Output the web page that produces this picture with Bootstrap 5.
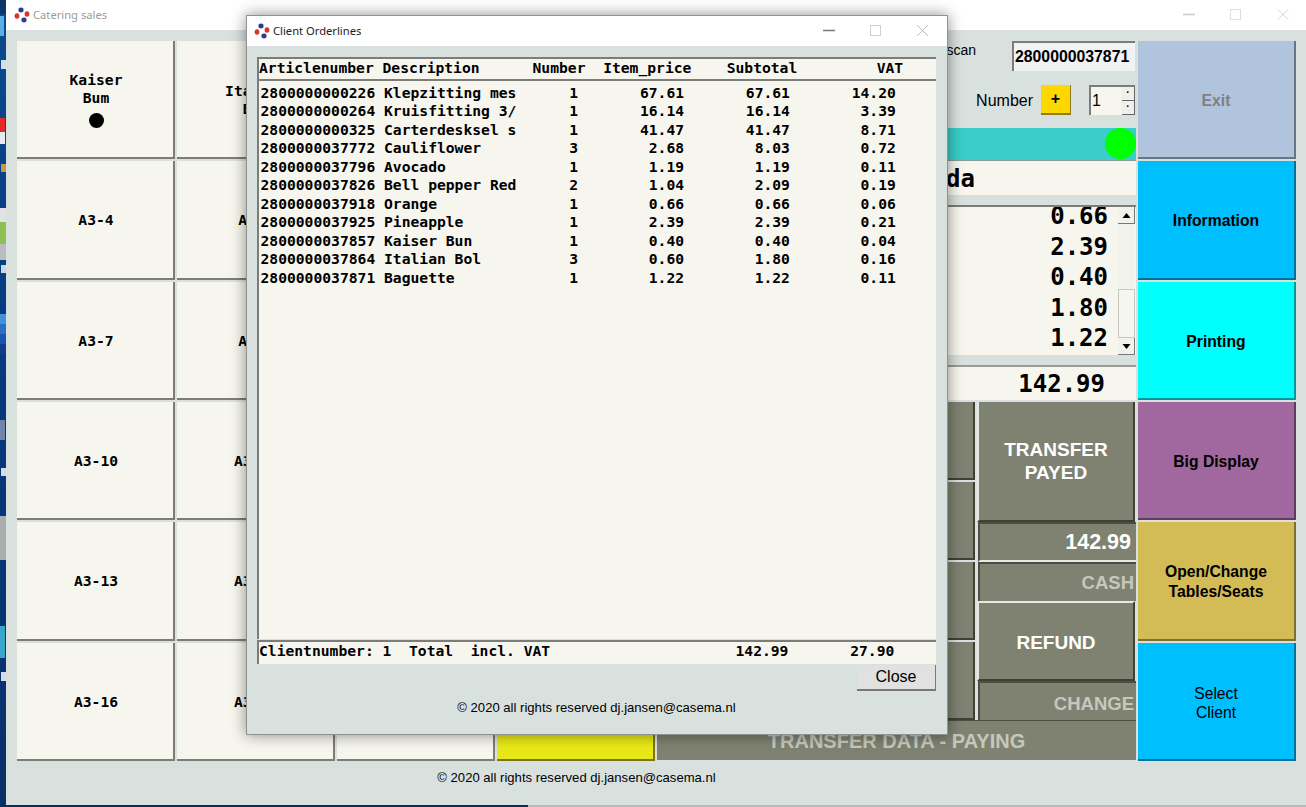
<!DOCTYPE html>
<html lang="en">
<head>
  <meta charset="utf-8">
  <meta name="viewport" content="width=device-width, initial-scale=1">
  <title>Catering sales</title>
  <link href="https://cdn.jsdelivr.net/npm/bootstrap@5.3.3/dist/css/bootstrap.min.css" rel="stylesheet">
  <script src="https://cdn.jsdelivr.net/npm/bootstrap@5.3.3/dist/js/bootstrap.bundle.min.js"></script>
  <style>
    html, body { margin: 0; background: #0b3b7c; overflow: hidden; }
    .desktop { position: relative; width: 1306px; height: 807px; overflow: hidden; font-family: "Liberation Sans", Arial, sans-serif; color: #000; background: linear-gradient(180deg, #0b4a8e 0%, #06397f 45%, #0a2f68 100%); }
    .desk-strip { position: absolute; left: 0; top: 0; width: 6px; height: 807px; }
    .task-strip { position: absolute; left: 0; right: 0; bottom: 0; height: 2px; background: linear-gradient(90deg, #062f57 0, #062f57 528px, #b9bcb9 528px); }

    /* windows */
    .app-window { position: absolute; left: 6px; top: 0; width: 1300px; height: 805px; background: #d9e1df; }
    .dlg-window { position: absolute; left: 246px; top: 15px; width: 702px; height: 720px; background: #d9e1df; border: 1px solid #8f9292; box-shadow: 0 0 14px rgba(0, 0, 0, .45); }
    .win-title { height: 30px; background: #fff; font-family: "Noto Sans", sans-serif; font-size: 11.2px; }
    .app-window .win-title { color: #9b9b9b; padding-left: 8px; }
    .dlg-window .win-title { height: 30px; color: #222; padding-left: 7px; }
    .app-logo { width: 16px; height: 16px; margin-right: 3px; flex: none; }
    .win-ctl { width: 47px; height: 100%; flex: none; }

    /* main window layout */
    .app-body { padding: 11px 10px 0 11px; gap: 2px; }
    .tile-grid { display: grid; grid-template-columns: repeat(4, 158px); grid-template-rows: repeat(6, 1fr); gap: 2px; width: 638px; height: 720px; }
    .tile { background: #f7f6ee; border-right: 2px solid #7d7d75; border-bottom: 2px solid #7d7d75; font: bold 14.67px/18px "DejaVu Sans Mono", monospace; }
    .tile-text { padding: 2px 0 0 2px; }
    .tile-first { padding: 0 0 0 2px; }
    .tile-dot { width: 15px; height: 15px; border-radius: 50%; background: #000; margin-top: 6px; }
    .tile-yellow { background: #e8e817; border-right-color: #77771a; border-bottom-color: #77771a; }

    .mid-panel { width: 479px; height: 720px; }
    .mono-big { font: bold 24px/30.5px "DejaVu Sans Mono", monospace; }
    .scan-row { height: 30px; padding-right: 1px; }
    .scan-label { font-size: 14px; line-height: 18px; margin-right: 36px; }
    .scan-box { width: 123px; height: 30px; background: #f1f2f3; border-top: 2px solid #7c7c78; border-left: 2px solid #7c7c78; font: bold 15.8px/27px "Liberation Sans", sans-serif; padding-left: 1px; }
    .number-row { height: 30px; margin-top: 14px; padding-right: 1px; }
    .number-label { font-size: 16px; margin-right: 8px; padding-top: 2px; }
    .plus-btn { width: 30px; height: 30px; background: #ffd700; border-right: 1px solid #8d7f20; border-bottom: 2px solid #8d7f20; font: bold 16px/28px "Liberation Sans", sans-serif; text-align: center; margin-right: 18px; }
    .spin-box { width: 46px; height: 30px; background: #f7f6ee; border-top: 2px solid #7c7c78; border-left: 2px solid #7c7c78; font-size: 16px; line-height: 27px; padding-left: 1px; }
    .spin-btns { width: 13px; }
    .spin-btns > div { flex: 1; background: #f0f0ea; border-right: 1px solid #666; border-bottom: 1px solid #666; font: bold 10px/11px "Liberation Sans", sans-serif; text-align: center; }
    .status-bar { height: 33px; margin-top: 13px; background: #3acdc9; border-bottom: 1px solid #8a9a98; }
    .status-dot { width: 31px; height: 31px; border-radius: 50%; background: #00ff00; }
    .name-row { height: 34px; background: #f7f6ee; padding-left: 289px; line-height: 36px; }
    .list-box { height: 150px; margin-top: 10px; background: #f7f6ee; border-top: 2px solid #7c7c78; overflow: hidden; }
    .list-rows { text-align: right; padding-right: 10px; margin-top: -6px; }
    .list-scroll { width: 17px; margin-right: 1px; background: #f3f3ed; }
    .sb-btn { height: 17px; flex: none; background: #f2f2ec; border-right: 1px solid #777; border-bottom: 1px solid #777; }
    .sb-thumb { height: 49px; margin-top: auto; background: #f6f6f0; border: 1px solid #c9c9c2; }
    .total-row { height: 35px; margin-top: 10px; background: #f7f6ee; border-top: 2px solid #9a9c98; text-align: right; padding-right: 31px; line-height: 34px; }

    .pay-block { height: 358px; margin-top: 2px; }
    .pay-cols { height: 318px; gap: 2px; }
    .pay-left { width: 318px; gap: 2px; }
    .pay-btn { background: #7f8271; color: #fff; font: bold 19px/23px "Liberation Sans", sans-serif; border-right: 2px solid #3f4136; border-bottom: 2px solid #3f4136; }
    .pay-right { width: 159px; }
    .trn-btn { height: 120px; margin-right: 1px; border-left: 2px solid #e6e8e4; }
    .refund-btn { height: 80px; margin-right: 1px; padding-top: 3px; border-top: 2px solid #e6e8e4; border-left: 2px solid #e6e8e4; }
    .pay-field { background: #7f8271; border-top: 2px solid #4c4e42; border-left: 2px solid #4c4e42; font: bold 18.5px/36px "Liberation Sans", sans-serif; text-align: right; padding-right: 2px; margin-left: 1px; }
    .amt-total { height: 40px; color: #fff; font-size: 21.5px; border-bottom: 2px solid #e6e8e4; padding-right: 5px; }
    .amt-cash { height: 39px; line-height: 38px; }
    .amt-change { height: 39px; line-height: 41px; }
    .txt-off { color: #c6c8bd; }
    .pay-bar { height: 40px; background: #7f8271; color: #c6c8bd; font: bold 20px/41px "Liberation Sans", sans-serif; border-top: 1px solid #4c4e42; text-align: center; }

    .side-col { width: 158px; height: 720px; gap: 2px; }
    .side-btn { flex: 1; padding-top: 4px; font: bold 15.7px/20px "Liberation Sans", sans-serif; border-right: 2px solid rgba(0, 0, 0, .4); border-bottom: 2px solid rgba(0, 0, 0, .4); }
    .side-exit { background: #b0c4de; color: #808080; }
    .side-info { background: #00bfff; }
    .side-print { background: #00ffff; }
    .side-big { background: #a1679f; }
    .side-open { background: #d3bb55; }
    .side-select { background: #00bfff; font-weight: 400; line-height: 19px; }

    .copy-line { font-size: 13.1px; line-height: 18px; }
    .app-copy { width: 1119px; margin: 8px 0 0 11px; }

    /* order lines dialog */
    .order-body { padding: 11px 11px 0 10px; }
    .order-pre { margin: 0; background: #f7f6ee; font: bold 14.67px/18.45px "DejaVu Sans Mono", monospace; color: #000; overflow: hidden; }
    .order-head { height: 24px; border-top: 2px solid #7c7c78; border-left: 2px solid #7c7c78; border-bottom: 2px solid #7c7c78; line-height: 17px; }
    .order-list { height: 558px; border-left: 2px solid #7c7c78; padding: 3px 0 0 1.5px; }
    .order-foot { height: 24px; margin-top: 1px; border-top: 2px solid #7c7c78; border-left: 2px solid #7c7c78; line-height: 17px; }
    .close-btn { width: 79px; height: 26px; margin: 1px 0 0 0; background: #e1e1e1; border: 0; border-right: 1px solid #777; border-bottom: 2px solid #777; border-radius: 0; padding: 0; font: 16px/24px "Liberation Sans", sans-serif; color: #000; }
    .dlg-copy { margin-top: 8px; }
  </style>
</head>
<body>
<div class="desktop">
  <svg class="desk-strip" viewBox="0 0 6 807" aria-hidden="true">
    <rect x="0" y="0" width="6" height="14" fill="#0d3566"/>
    <rect x="0" y="16" width="4" height="20" fill="#5ab0e6"/>
    <rect x="1" y="60" width="5" height="9" fill="#d6dde6"/>
    <rect x="0" y="118" width="5" height="14" fill="#e22a2a"/>
    <rect x="0" y="132" width="5" height="12" fill="#e6e9ee"/>
    <rect x="1" y="164" width="5" height="8" fill="#c89a3c"/>
    <rect x="0" y="208" width="6" height="14" fill="#dfe3e6"/>
    <rect x="0" y="222" width="6" height="22" fill="#8cc152"/>
    <rect x="0" y="244" width="6" height="16" fill="#b9bdc0"/>
    <rect x="1" y="265" width="5" height="8" fill="#cfd6de"/>
    <rect x="0" y="314" width="6" height="10" fill="#3f93d9"/>
    <rect x="0" y="324" width="6" height="10" fill="#2a6fc4"/>
    <rect x="0" y="334" width="6" height="10" fill="#1b53ad"/>
    <rect x="0" y="344" width="6" height="10" fill="#123d8c"/>
    <rect x="0" y="420" width="5" height="20" fill="#6f84a8"/>
    <rect x="1" y="468" width="5" height="8" fill="#d6dde6"/>
    <rect x="0" y="516" width="6" height="44" fill="#a9adb0"/>
    <rect x="0" y="626" width="5" height="32" fill="#37a6c8"/>
    <rect x="1" y="672" width="5" height="9" fill="#d6dde6"/>
  </svg>
  <div class="task-strip"></div>

  <div class="app-window d-flex flex-column">
    <div class="win-title d-flex align-items-center">
      <svg class="app-logo" viewBox="0 0 16 16" aria-hidden="true">
        <ellipse cx="7" cy="3" rx="2.6" ry="2.4" fill="#24408f"/><ellipse cx="10" cy="13" rx="2.6" ry="2.4" fill="#24408f"/>
        <ellipse cx="3" cy="9" rx="2.4" ry="2.8" fill="#d8362a"/><ellipse cx="13" cy="7" rx="2.4" ry="2.8" fill="#d8362a"/>
      </svg>
      <span>Catering sales</span>
      <div class="d-flex ms-auto h-100">
        <svg class="win-ctl" viewBox="0 0 47 30" aria-hidden="true"><path d="M18 14.5h12" stroke="#c9c9c9" stroke-width="1.5"/></svg>
        <svg class="win-ctl" viewBox="0 0 47 30" aria-hidden="true"><rect x="18.5" y="9.5" width="10" height="10" fill="none" stroke="#dedede"/></svg>
        <svg class="win-ctl" viewBox="0 0 47 30" aria-hidden="true"><path d="M19 9.5l10 10M29 9.5l-10 10" stroke="#d4d4d4"/></svg>
      </div>
    </div>

    <div class="app-body d-flex">
      <div class="tile-grid">
        <div class="tile tile-first d-flex flex-column align-items-center justify-content-center text-center">Kaiser<br>Bum<div class="tile-dot"></div></div>
        <div class="tile tile-text d-flex align-items-center justify-content-center text-center">Italian<br>Bol</div>
        <div class="tile"></div>
        <div class="tile"></div>
        <div class="tile tile-text d-flex align-items-center justify-content-center">A3-4</div>
        <div class="tile tile-text d-flex align-items-center justify-content-center">A3-5</div>
        <div class="tile"></div>
        <div class="tile"></div>
        <div class="tile tile-text d-flex align-items-center justify-content-center">A3-7</div>
        <div class="tile tile-text d-flex align-items-center justify-content-center">A3-8</div>
        <div class="tile"></div>
        <div class="tile"></div>
        <div class="tile tile-text d-flex align-items-center justify-content-center">A3-10</div>
        <div class="tile tile-text d-flex align-items-center justify-content-center">A3-11</div>
        <div class="tile"></div>
        <div class="tile"></div>
        <div class="tile tile-text d-flex align-items-center justify-content-center">A3-13</div>
        <div class="tile tile-text d-flex align-items-center justify-content-center">A3-14</div>
        <div class="tile"></div>
        <div class="tile"></div>
        <div class="tile tile-text d-flex align-items-center justify-content-center">A3-16</div>
        <div class="tile tile-text d-flex align-items-center justify-content-center">A3-17</div>
        <div class="tile"></div>
        <div class="tile tile-yellow"></div>
      </div>

      <div class="mid-panel d-flex flex-column">
        <div class="scan-row d-flex justify-content-end">
          <span class="scan-label">scan</span>
          <div class="scan-box">2800000037871</div>
        </div>
        <div class="number-row d-flex justify-content-end align-items-center">
          <span class="number-label">Number</span>
          <div class="plus-btn">+</div>
          <div class="spin-box d-flex justify-content-between">1
            <div class="spin-btns d-flex flex-column"><div>·</div><div>·</div></div>
          </div>
        </div>
        <div class="status-bar d-flex justify-content-end"><div class="status-dot"></div></div>
        <div class="name-row mono-big">da</div>
        <div class="list-box d-flex">
          <div class="list-rows mono-big flex-grow-1">0.66<br>2.39<br>0.40<br>1.80<br>1.22</div>
          <div class="list-scroll d-flex flex-column">
            <div class="sb-btn d-flex align-items-center justify-content-center"><svg width="9" height="5" viewBox="0 0 9 5" aria-hidden="true"><path d="M4.5 0l4 5h-8z"/></svg></div>
            <div class="sb-thumb"></div>
            <div class="sb-btn d-flex align-items-center justify-content-center"><svg width="9" height="5" viewBox="0 0 9 5" aria-hidden="true"><path d="M4.5 5l4-5h-8z"/></svg></div>
          </div>
        </div>
        <div class="total-row mono-big">142.99</div>

        <div class="pay-block d-flex flex-column">
          <div class="pay-cols d-flex">
            <div class="pay-left d-flex flex-column">
              <div class="pay-btn flex-fill"></div>
              <div class="pay-btn flex-fill"></div>
              <div class="pay-btn flex-fill"></div>
              <div class="pay-btn flex-fill"></div>
            </div>
            <div class="pay-right d-flex flex-column">
              <div class="pay-btn d-flex align-items-center justify-content-center text-center trn-btn">TRANSFER<br>PAYED</div>
              <div class="pay-field amt-total">142.99</div>
              <div class="pay-field amt-cash txt-off">CASH</div>
              <div class="pay-btn d-flex align-items-center justify-content-center refund-btn">REFUND</div>
              <div class="pay-field amt-change txt-off">CHANGE</div>
            </div>
          </div>
          <div class="pay-bar">TRANSFER DATA - PAYING</div>
        </div>
      </div>

      <div class="side-col d-flex flex-column">
        <div class="side-btn side-exit d-flex align-items-center justify-content-center text-center">Exit</div>
        <div class="side-btn side-info d-flex align-items-center justify-content-center text-center">Information</div>
        <div class="side-btn side-print d-flex align-items-center justify-content-center text-center">Printing</div>
        <div class="side-btn side-big d-flex align-items-center justify-content-center text-center">Big Display</div>
        <div class="side-btn side-open d-flex align-items-center justify-content-center text-center">Open/Change<br>Tables/Seats</div>
        <div class="side-btn side-select d-flex align-items-center justify-content-center text-center">Select<br>Client</div>
      </div>
    </div>

    <div class="copy-line app-copy text-center">© 2020 all rights reserved dj.jansen@casema.nl</div>
  </div>

  <div class="dlg-window d-flex flex-column">
    <div class="win-title d-flex align-items-center">
      <svg class="app-logo" viewBox="0 0 16 16" aria-hidden="true">
        <ellipse cx="7" cy="3" rx="2.6" ry="2.4" fill="#24408f"/><ellipse cx="10" cy="13" rx="2.6" ry="2.4" fill="#24408f"/>
        <ellipse cx="3" cy="9" rx="2.4" ry="2.8" fill="#d8362a"/><ellipse cx="13" cy="7" rx="2.4" ry="2.8" fill="#d8362a"/>
      </svg>
      <span>Client Orderlines</span>
      <div class="d-flex ms-auto h-100">
        <svg class="win-ctl" viewBox="0 0 47 30" aria-hidden="true"><path d="M17 14.5h12" stroke="#777" stroke-width="1.5"/></svg>
        <svg class="win-ctl" viewBox="0 0 47 30" aria-hidden="true"><rect x="17.5" y="9.5" width="10" height="10" fill="none" stroke="#cfcfcf"/></svg>
        <svg class="win-ctl" viewBox="0 0 47 30" aria-hidden="true"><path d="M17 9l11 11M28 9l-11 11" stroke="#bdbdbd"/></svg>
      </div>
    </div>
    <div class="order-body d-flex flex-column">
      <pre class="order-pre order-head">Articlenumber Description      Number  Item_price    Subtotal         VAT</pre>
      <pre class="order-pre order-list" id="orderLines"></pre>
      <pre class="order-pre order-foot" id="orderFoot"></pre>
      <button type="button" class="btn close-btn align-self-end">Close</button>
      <div class="copy-line dlg-copy text-center">© 2020 all rights reserved dj.jansen@casema.nl</div>
    </div>
  </div>
</div>

<script>
  // Order lines shown in the dialog: number, description, count, price, subtotal, vat
  const orderLines=[
    ['2800000000226','Klepzitting mes',1,'67.61','67.61','14.20'],
    ['2800000000264','Kruisfitting 3/',1,'16.14','16.14','3.39'],
    ['2800000000325','Carterdesksel s',1,'41.47','41.47','8.71'],
    ['2800000037772','Cauliflower',3,'2.68','8.03','0.72'],
    ['2800000037796','Avocado',1,'1.19','1.19','0.11'],
    ['2800000037826','Bell pepper Red',2,'1.04','2.09','0.19'],
    ['2800000037918','Orange',1,'0.66','0.66','0.06'],
    ['2800000037925','Pineapple',1,'2.39','2.39','0.21'],
    ['2800000037857','Kaiser Bun',1,'0.40','0.40','0.04'],
    ['2800000037864','Italian Bol',3,'0.60','1.80','0.16'],
    ['2800000037871','Baguette',1,'1.22','1.22','0.11']
  ];
  // Fixed character columns, everything is monospace
  document.getElementById('orderLines').textContent=orderLines.map(line=>
    line[0]+' '+line[1].padEnd(21)+line[2]+line[3].padStart(12)+line[4].padStart(12)+line[5].padStart(12)
  ).join('\n');
  document.getElementById('orderFoot').textContent=
    'Clientnumber: 1  Total  incl. VAT'.padEnd(54)+'142.99'+'27.90'.padStart(12);
</script>
</body>
</html>
